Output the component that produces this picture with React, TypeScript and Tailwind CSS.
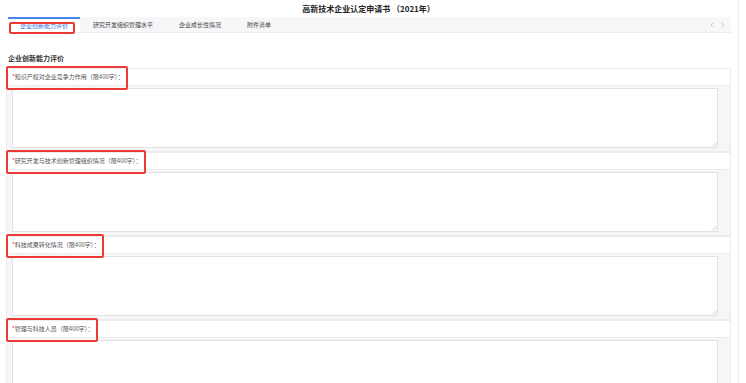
import { ChevronLeft, ChevronRight } from 'lucide-react'

const tabs = ['企业创新能力评价', '研究开发组织管理水平', '企业成长性情况', '附件清单']

const fields = [
    '知识产权对企业竞争力作用（限400字）：',
    '研究开发与技术创新管理组织情况（限400字）：',
    '科技成果转化情况（限400字）：',
    '管理与科技人员（限400字）：',
]

const Field = ({ label }: { label: string }) => {
    return (
        <div className='flex flex-col shrink-0'>
            <div className='h-[18px] shrink-0 flex items-center bg-white border border-[#ececec] pl-[5px]'>
                <span className='relative text-[6px] leading-none text-[#555]'>
                    <span className='text-[#e53935]'>*</span>{label}
                    <span className='absolute z-10 -left-[6px] -right-[4px] -top-[8px] -bottom-[10px] border-2 border-[#ea3b35] rounded-[2px]' />
                </span>
            </div>
            <div className='h-[66px] shrink-0 bg-[#f6f6f6] border-x border-b border-[#ececec] pl-[5px] pr-[12px] pt-[2px] pb-[3px]'>
                <div className='relative'>
                    <textarea className='w-full h-[60px] bg-white border border-[#e2e2e2] block outline-none resize-none' />
                    <svg className='absolute right-[1px] bottom-[1px]' width='6' height='6' viewBox='0 0 6 6'>
                        <path d='M5.5 1 L1 5.5 M5.5 3.5 L3.5 5.5' stroke='#c8c8c8' strokeWidth='0.8' />
                    </svg>
                </div>
            </div>
        </div>
    )
}

const App = () => {
    return (
        <div className='h-[383px] overflow-hidden bg-white flex items-start' style={{ fontFamily: '"Noto Sans CJK SC", "Noto Sans", sans-serif' }}>
            <div className='w-[731px] shrink-0 pl-[6px]'>
                <div className='h-[16px] flex items-center justify-center pt-[1px]'>
                    <span className='text-[8px] font-bold text-[#222] leading-none'>高新技术企业认定申请书 （2021年）</span>
                </div>

                <div className='mt-[1px] ml-[2px] h-[16px] flex items-stretch bg-[#f7f7f9] border-b border-[#ededed]'>
                    <div className='relative flex items-center px-[12px] bg-white border-t-2 border-[#4a86e8]'>
                        <span className='text-[6px] text-[#2f6fe0] leading-none'>{tabs[0]}</span>
                        <span className='absolute z-10 left-[1px] right-[5px] top-[3px] -bottom-[2px] border-2 border-[#ea3b35] rounded-[2px]' />
                    </div>
                    {tabs.slice(1).map((t) => (
                        <div key={t} className='flex items-center px-[13px]'>
                            <span className='text-[6px] text-[#444] leading-none'>{t}</span>
                        </div>
                    ))}
                    <div className='ml-auto flex items-center gap-[3px] pr-[4px] text-[#999]'>
                        <ChevronLeft size={8} strokeWidth={1.5} />
                        <ChevronRight size={8} strokeWidth={1.5} />
                    </div>
                </div>

                <div className='mt-[22px] ml-[2px] text-[7px] font-bold text-[#333] leading-none'>企业创新能力评价</div>

                <div className='mt-[6px] flex flex-col'>
                    {fields.map((f) => (
                        <Field key={f} label={f} />
                    ))}
                </div>
            </div>
            <div className='w-[7px] shrink-0' />
            <div className='w-[1px] h-full shrink-0 bg-[#ececec]' />
        </div>
    )
}

export default App
